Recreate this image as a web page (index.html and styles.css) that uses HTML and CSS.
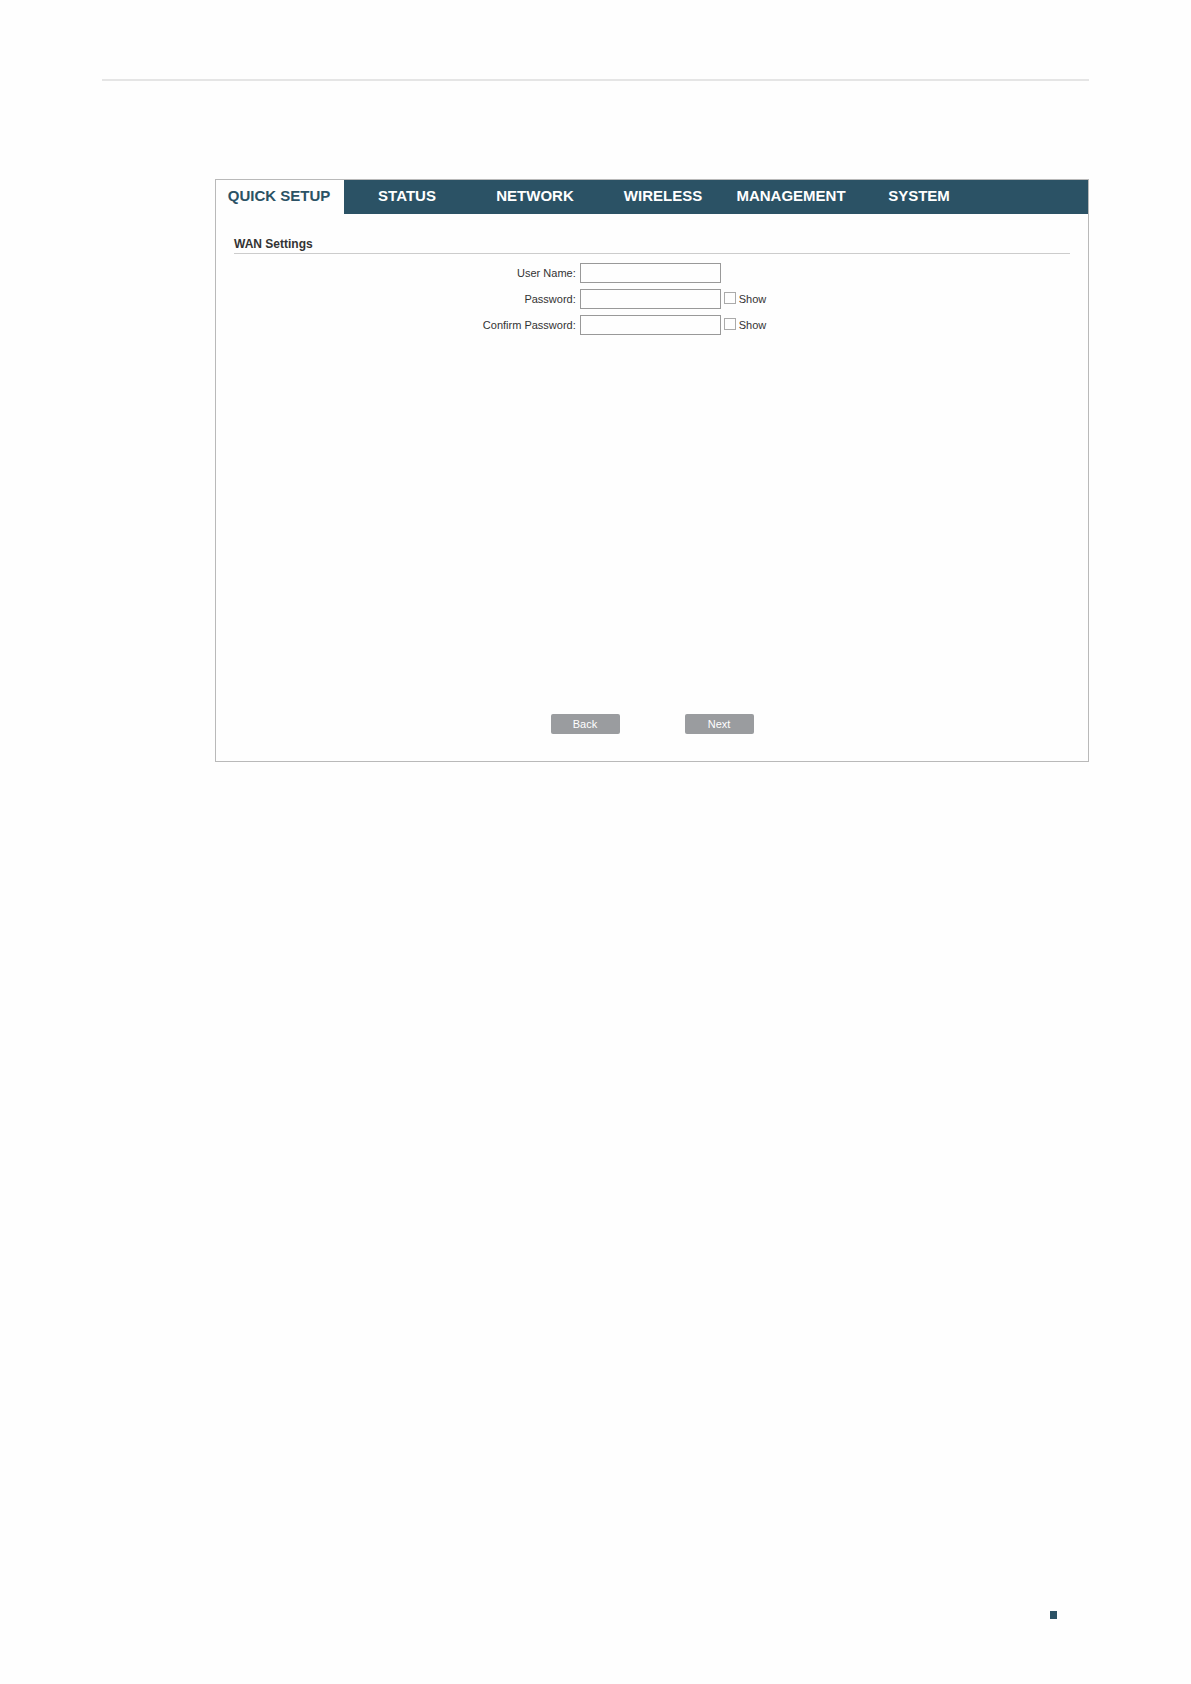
FILE: index.html
```html
<!DOCTYPE html>
<html lang="en">
  <head>
    <title>Quick Setup</title>
    <meta charset="UTF-8" />
    <meta name="viewport" content="width=device-width, initial-scale=1" />
    <link rel="stylesheet" href="styles.css">
  </head>
  <body>
    <hr class="page-rule" />

    <main class="panel">
      <nav class="tabs">
        <a class="active" href="#quick-setup">QUICK SETUP</a>
        <a href="#status">STATUS</a>
        <a href="#network">NETWORK</a>
        <a href="#wireless">WIRELESS</a>
        <a href="#management">MANAGEMENT</a>
        <a href="#system">SYSTEM</a>
      </nav>

      <form class="settings">
        <h1>WAN Settings</h1>

        <div class="row">
          <label for="username">User Name:</label>
          <div class="field">
            <input type="text" id="username" name="username" />
          </div>
        </div>

        <div class="row">
          <label for="password">Password:</label>
          <div class="field">
            <input type="password" id="password" name="password" />
            <input type="checkbox" id="show-password" />
            <label for="show-password">Show</label>
          </div>
        </div>

        <div class="row">
          <label for="confirm">Confirm Password:</label>
          <div class="field">
            <input type="password" id="confirm" name="confirm" />
            <input type="checkbox" id="show-confirm" />
            <label for="show-confirm">Show</label>
          </div>
        </div>

        <div class="buttons">
          <button type="button">Back</button>
          <button type="button">Next</button>
        </div>
      </form>
    </main>

    <footer class="page-footer">
      <div class="marker"></div>
    </footer>

    <script>
      // each Show box switches the password field in front of it
      document.querySelectorAll('input[type="checkbox"]').forEach((box) => {
        box.addEventListener("change", function () {
          this.previousElementSibling.type = this.checked ? "text" : "password";
        });
      });
    </script>
  </body>
</html>
```
FILE: styles.css
```css
* {
  box-sizing: border-box;
}

body {
  display: flex;
  flex-direction: column;
  min-height: 100vh;
  margin: 0;
  padding: 79px 102px 65px;
  background-color: #fefefe;
  color: #333;
  font-family: "Liberation Sans", Arial, sans-serif;
  font-size: 11px;
}

.page-rule {
  width: 100%;
  height: 2px;
  margin: 0 0 98px;
  border: 0;
  background-color: #e5e5e5;
}

.panel {
  display: flex;
  flex-direction: column;
  min-height: 583px;
  margin-left: 113px;
  border: 1px solid #b9b9b9;
}

.tabs {
  display: flex;
  background-color: #2b5265;
}

.tabs a {
  width: 128px;
  padding: 0 2px 2px 0;
  line-height: 32px;
  color: white;
  font-size: 15px;
  font-weight: bold;
  text-align: center;
  text-decoration: none;
}

.tabs .active {
  background-color: #fefefe;
  color: #2b5265;
}

.settings {
  display: flex;
  flex-direction: column;
  flex: 1;
  gap: 6px;
  padding: 22px 18px 27px;
}

h1 {
  margin: 0 0 3px;
  border-bottom: 1px solid #ccc;
  font-size: 12px;
  line-height: 17px;
}

.row {
  display: grid;
  grid-template-columns: 41% 1fr;
  gap: 3px;
  align-items: center;
}

.row label {
  padding: 0 1px 1px 0;
}

.row > label {
  text-align: right;
}

.field {
  display: flex;
  align-items: center;
  gap: 3px;
}

.field input {
  margin: 0;
  border: 1px solid #999;
  background-color: #fefefe;
}

.field input[type="text"],
.field input[type="password"] {
  width: 141px;
  height: 20px;
  padding: 0 4px;
  font: inherit;
}

.field input[type="checkbox"] {
  appearance: none;
  width: 12px;
  height: 12px;
  margin-bottom: 2px;
  border-color: #aaa;
}

.field input[type="checkbox"]:checked {
  background-color: #2b5265;
}

.buttons {
  display: flex;
  justify-content: center;
  gap: 65px;
  margin-top: auto;
}

button {
  width: 69px;
  height: 20px;
  padding: 0;
  border: 0;
  border-radius: 2px;
  background-color: #9a9c9f;
  color: white;
  font: inherit;
}

.page-footer {
  display: flex;
  justify-content: flex-end;
  margin-top: auto;
  padding-right: 32px;
}

.marker {
  width: 7px;
  height: 8px;
  background-color: #2b5265;
}
```
